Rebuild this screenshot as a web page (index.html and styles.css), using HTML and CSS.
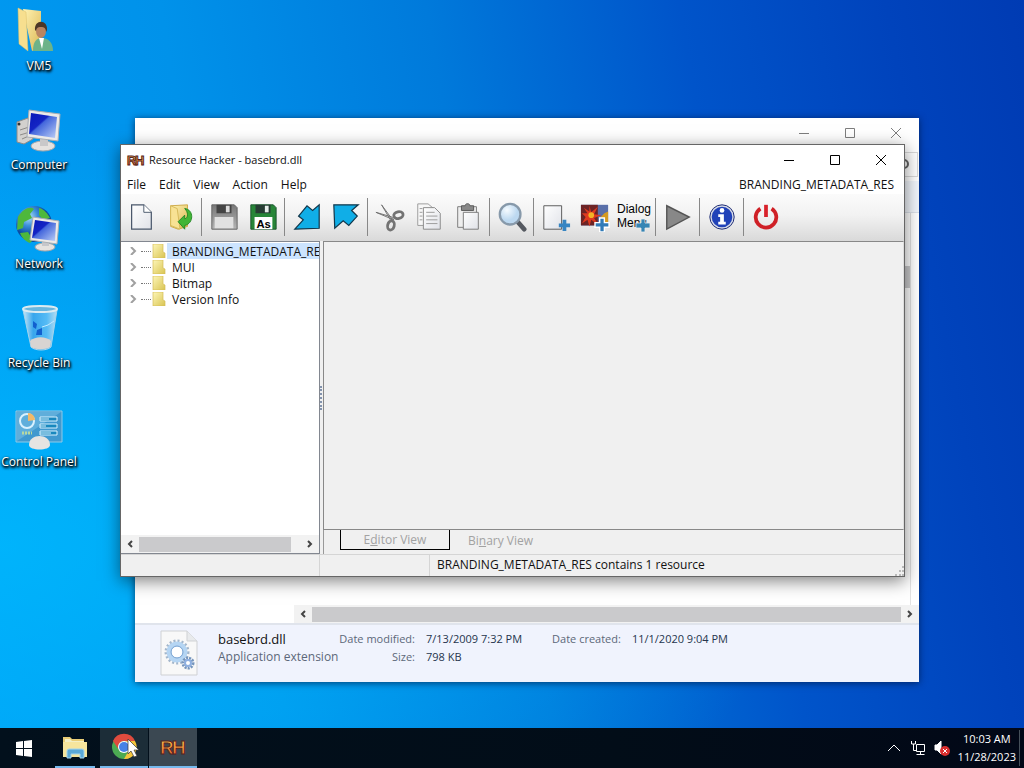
FILE: index.html
```
<!DOCTYPE html>
<html lang="en">
<head>
    <meta charset="UTF-8">
    <meta name="viewport" content="width=device-width, initial-scale=1.0">
    <title>Resource Hacker - basebrd.dll</title>
    <link rel="stylesheet" href="styles.css">
</head>
<body>
    <!-- Shared gradients for the icons -->
    <svg class="defs" aria-hidden="true">
        <defs>
            <linearGradient id="paper" x1="0" y1="0" x2="1" y2="1"><stop offset="0" stop-color="#fff"/><stop offset="1" stop-color="#e0e2e8"/></linearGradient>
            <linearGradient id="folder" x1="0" y1="0" x2="1" y2="1"><stop offset="0" stop-color="#fff3b4"/><stop offset="1" stop-color="#dcb854"/></linearGradient>
            <linearGradient id="node" x1="0" y1="0" x2="1" y2="1"><stop offset="0" stop-color="#fdf6b8"/><stop offset="1" stop-color="#d9c452"/></linearGradient>
            <linearGradient id="screen" x1="0" y1="0" x2="1" y2="1"><stop offset="0" stop-color="#0818b8"/><stop offset=".4" stop-color="#1424c4"/><stop offset=".45" stop-color="#4467dc"/><stop offset="1" stop-color="#bccff6"/></linearGradient>
            <linearGradient id="glass" x1="0" y1="0" x2="1" y2="0"><stop offset="0" stop-color="#c9e8f8"/><stop offset=".3" stop-color="#38a6ed"/><stop offset=".7" stop-color="#55bbf5"/><stop offset="1" stop-color="#b7ddf2"/></linearGradient>
            <linearGradient id="metal" x1="0" y1="0" x2="0" y2="1"><stop offset="0" stop-color="#777"/><stop offset="1" stop-color="#b5b5b5"/></linearGradient>
            <radialGradient id="globe" cx=".35" cy=".3"><stop offset="0" stop-color="#b6e4fb"/><stop offset=".5" stop-color="#3c8edb"/><stop offset="1" stop-color="#0b4ba0"/></radialGradient>
            <radialGradient id="lens" cx=".35" cy=".3"><stop offset="0" stop-color="#f5fbff"/><stop offset="1" stop-color="#bcd8f0"/></radialGradient>
            <linearGradient id="fire" x1="0" y1="0" x2="0" y2="1"><stop offset="0" stop-color="#ffd552"/><stop offset="1" stop-color="#ec5a24"/></linearGradient>
        </defs>
    </svg>

    <main class="desktop">
        <!-- Desktop shortcuts -->
        <nav class="shortcuts" aria-label="Desktop">
            <button class="shortcut">
                <svg viewBox="0 0 48 48"><path d="M8 2l18 2v36l-9 4z" fill="url(#folder)"/><path d="M3 1l8 4 2 39-9-7z" fill="#f7df8f" stroke="#dcc06a" stroke-width=".5"/><path d="M18 44c0-9 3-13 9-13s11 4 11 13z" fill="#6db389"/><path d="M24 31l3 11 2-11z" fill="#fff"/><ellipse cx="26" cy="24" rx="5" ry="7" fill="#b98562"/><path d="M20 23c-1-11 13-11 12 0l-1 2c0-4-2-5-5-5-4 0-4 1-5 4z" fill="#4c3626"/></svg>
                <span>VM5</span>
            </button>
            <button class="shortcut">
                <svg viewBox="0 0 48 48"><path d="M2 16l11-4 5 21-9 5-7-2z" fill="#d3d1ce" stroke="#8d8b89"/><circle cx="4" cy="18" r="1.500" fill="#333"/><path d="M5 24l9-3m-9 8l10-3m-8 7l9-4" stroke="#8d8b89"/><ellipse cx="28" cy="40" rx="12" ry="5" fill="#e5e2df" stroke="#a6a6a8"/><path d="M25 32h8v8h-8z" fill="#c9c8c9"/><path d="M14 4l31 4-2 27-31-4z" fill="#eceae8" stroke="#a9aeb4"/><path d="M16 7l26 4-2 21-26-4z" fill="url(#screen)"/></svg>
                <span>Computer</span>
            </button>
            <button class="shortcut">
                <svg viewBox="0 0 48 48"><circle cx="19" cy="19" r="18" fill="url(#globe)"/><path d="M3 12C8 3 16 1 19 4l-4 5 2 4-8 4-1 6-6 2zM24 3c5 1 9 6 11 10l-7 2-4-5zM5 28l8-1 5 8-3 3c-5-2-8-5-10-10z" fill="#4eb83c"/><ellipse cx="30" cy="42" rx="10" ry="4" fill="#e5e2df" stroke="#a6a6a8"/><path d="M27 36h7v5h-7z" fill="#c6c7cb"/><path d="M18 12l26 4-2 23-27-4z" fill="#eceae8" stroke="#a9aeb4"/><path d="M20 15l21 3-1 18-23-3z" fill="url(#screen)"/></svg>
                <span>Network</span>
            </button>
            <button class="shortcut">
                <svg viewBox="0 0 48 48"><path d="M8 6h34l-6 37c-4 4-16 4-20 0z" fill="url(#glass)" stroke="#a5d4ec"/><path d="M15 37c5-5 16-5 21 0l-1 6c-4 3-15 3-19 0z" fill="#d8d4d2"/><ellipse cx="25" cy="5" rx="17" ry="3" fill="#68b6df" stroke="#dcebf1" stroke-width="2"/><path d="M18 17l4 3-1 5-3-2zM22 26l5-2v7l-6 0z" fill="#1260cf"/><path d="M39 17q-6 5-12 6" stroke="#c3eaff" fill="none"/></svg>
                <span>Recycle Bin</span>
            </button>
            <button class="shortcut">
                <svg viewBox="0 0 48 48"><path d="M1 8h46v31H1z" fill="#4099cf" stroke="#8fcae8"/><path d="M2 9h44L2 38z" fill="#75bce2" opacity=".6"/><circle cx="12" cy="18" r="7" fill="none" stroke="#d8f1ff" stroke-width="2"/><path d="M13 10a7 7 0 0 1 7 7l-7 1z" fill="#f4b968"/><path d="M7 30h10" stroke="#b7d9a0" stroke-width="3" stroke-dasharray="2 1"/><path d="M25 14h17v4H25zm0 7h17v4H25zm0 7h17v4H25z" fill="#1988be" stroke="#d9f2ff"/><path d="M25 16h9m-9 7h6m-6 7h11" stroke="#d9f2ff"/><path d="M14 42c0-12 21-12 21 0 0 6-21 6-21 0z" fill="#e5e4e2"/></svg>
                <span>Control Panel</span>
            </button>
        </nav>

        <!-- Explorer window behind -->
        <section class="window explorer" aria-label="Explorer">
            <header class="titlebar">
                <div class="window-buttons faded">
                    <button aria-label="Minimize"><svg viewBox="0 0 12 12"><path d="M1 6.500h10"/></svg></button>
                    <button aria-label="Maximize"><svg viewBox="0 0 12 12"><path d="M1.500 1.500h9v9h-9z"/></svg></button>
                    <button aria-label="Close"><svg viewBox="0 0 12 12"><path d="M1 1l10 10M11 1L1 11"/></svg></button>
                </div>
            </header>
            <div class="address-row">
                <div class="search"><svg viewBox="0 0 16 16"><circle cx="9" cy="7" r="4"/><path d="M6 10l-4 4"/></svg></div>
            </div>
            <div class="command-row"></div>
            <div class="files"><div class="files-list"><i class="vertical-thumb"></i></div></div>
            <div class="scrollbar explorer-scroll">
                <button aria-label="Scroll left"><svg viewBox="0 0 8 8"><path d="M6 1L3 4l3 3"/></svg></button>
                <i class="thumb"></i>
                <button aria-label="Scroll right"><svg viewBox="0 0 8 8"><path d="M2 1l3 3-3 3"/></svg></button>
            </div>
            <footer class="details">
                <svg class="dll-icon" viewBox="0 0 38 46"><path d="M1 1h26l10 10v34H1z" fill="#f8f8f8" stroke="#cfd1d4"/><path d="M27 1v10h10" fill="#e8eaec" stroke="#cfd1d4"/><circle cx="17" cy="22" r="11" fill="none" stroke="#a3b6cb" stroke-width="3" stroke-dasharray="2 2"/><circle cx="17" cy="22" r="8" fill="#fff" stroke="#b5d5f3" stroke-width="5"/><circle cx="17" cy="22" r="6" fill="none" stroke="#7ba4d2"/><circle cx="28" cy="33" r="5" fill="none" stroke="#7595bd" stroke-width="3" stroke-dasharray="2 1"/><circle cx="28" cy="33" r="3" fill="#fff" stroke="#8eafe0" stroke-width="2"/></svg>
                <div class="file-name"><strong>basebrd.dll</strong><span>Application extension</span></div>
                <dl class="modified">
                    <dt>Date modified:</dt><dd>7/13/2009 7:32 PM</dd>
                    <dt>Size:</dt><dd>798 KB</dd>
                </dl>
                <dl>
                    <dt>Date created:</dt><dd>11/1/2020 9:04 PM</dd>
                </dl>
            </footer>
        </section>

        <!-- Resource Hacker window -->
        <section class="window hacker" aria-label="Resource Hacker">
            <header class="titlebar">
                <svg class="app-icon" viewBox="0 0 18 16"><text class="rh" x="0 8" y="13" font-size="13">RH</text></svg>
                <h1>Resource Hacker - basebrd.dll</h1>
                <div class="window-buttons">
                    <button aria-label="Minimize"><svg viewBox="0 0 12 12"><path d="M1 6.500h10"/></svg></button>
                    <button aria-label="Maximize"><svg viewBox="0 0 12 12"><path d="M1.500 1.500h9v9h-9z"/></svg></button>
                    <button aria-label="Close"><svg viewBox="0 0 12 12"><path d="M1 1l10 10M11 1L1 11"/></svg></button>
                </div>
            </header>
            <nav class="menubar">
                <button>File</button><button>Edit</button><button>View</button><button>Action</button><button>Help</button>
                <span>BRANDING_METADATA_RES</span>
            </nav>
            <div class="toolbar" role="toolbar">
                <div class="tools">
                    <button aria-label="New"><svg viewBox="0 0 32 32"><path d="M6 3h13l8 8v18H6z" fill="url(#paper)" stroke="#49576b" stroke-width="1.300"/><path d="M19 3v8h8" fill="#fff" stroke="#49576b"/></svg></button>
                    <button aria-label="Open"><svg viewBox="0 0 32 32"><path d="M6 4l18-1v23l-10 3-8-3z" fill="url(#folder)" stroke="#cda946"/><path d="M6 4l7 3 3 22-10-4z" fill="#f8e294" stroke="#d5b95a"/><path d="M21 7c10 1 10 16 0 18v4l-7-8 7-7v4c4-1 4-7 0-11z" fill="#42b536" stroke="#238823"/></svg></button>
                </div>
                <div class="tools">
                    <button aria-label="Save"><svg viewBox="0 0 32 32"><path d="M3 3h24l3 3v23H3z" fill="url(#metal)" stroke="#626262"/><path d="M8 3h16v9H8z" fill="#444"/><path d="M18 4h4v7h-4z" fill="#ddd"/><path d="M6 16h20v12H6z" fill="#e1e1e1"/></svg></button>
                    <button aria-label="Save as"><svg viewBox="0 0 32 32"><path d="M3 3h24l3 3v23H3z" fill="#278638" stroke="#19512b"/><path d="M8 3h16v9H8z" fill="#263c33"/><path d="M18 4h4v7h-4z" fill="#e6eeea"/><path d="M7 16h19v13H7z" fill="#fff"/><text x="9" y="28" class="as">As</text></svg></button>
                </div>
                <div class="tools">
                    <button aria-label="Compile"><svg viewBox="0 0 32 32"><path d="M3 29L29 28V3L22 9l-6-5-9 11 5 4z" fill="#10aee7" stroke="#12374b" stroke-width="1.300"/></svg></button>
                    <button aria-label="Decompile"><svg viewBox="0 0 32 32"><path d="M3 3h26l-7 6 6 6-9 10-6-5-9 8z" fill="#10aee7" stroke="#12374b" stroke-width="1.300"/></svg></button>
                </div>
                <div class="tools">
                    <button aria-label="Cut"><svg viewBox="0 0 32 32"><path d="M1 11l17 5 2 3zM7 3l10 17 1-2z" fill="#eee" stroke="#6e6e6e"/><g fill="none" stroke="#737373" stroke-width="3"><ellipse cx="25" cy="14" rx="5" ry="3.500" transform="rotate(-12 25 14)"/><ellipse cx="17" cy="25" rx="3.500" ry="5" transform="rotate(15 17 25)"/></g></svg></button>
                    <button aria-label="Copy"><svg viewBox="0 0 32 32"><path d="M4 2h11l6 5v18H4z" fill="#f7f7f7" stroke="#999"/><path d="M10 6h12l6 6v17H10z" fill="url(#paper)" stroke="#888"/><path d="M6 7h3m-3 4h3m-3 4h3m-3 4h3m4-8h9m-9 4h12m-12 4h12m-12 4h12" stroke="#999"/></svg></button>
                    <button aria-label="Paste"><svg viewBox="0 0 32 32"><path d="M5 5h20v22H5z" fill="#eee" stroke="#777"/><path d="M9 4h4c0-3 5-3 5 0h4v5H9z" fill="#888" stroke="#555"/><path d="M11 11h16v18H11z" fill="url(#paper)" stroke="#777"/></svg></button>
                </div>
                <div class="tools">
                    <button aria-label="Find"><svg viewBox="0 0 32 32"><path d="M22 21l7 8" stroke="#555960" stroke-width="5" stroke-linecap="round"/><circle cx="14" cy="13" r="11" fill="url(#lens)" stroke="#8799aa" stroke-width="2.500"/></svg></button>
                </div>
                <div class="tools">
                    <button aria-label="Add resource"><svg viewBox="0 0 32 32"><path d="M3 4h19v25H3z" fill="url(#paper)" stroke="#555"/><path d="M23 19h4v4h4v4h-4v4h-4v-4h-4v-4h4z" fill="#3785c2"/></svg></button>
                    <button aria-label="Add image"><svg viewBox="0 0 32 32"><path d="M1 3h29v22H1z" fill="#596fa9"/><path d="M1 3h18v22H1z" fill="#6c2325"/><path d="M10 4l2 7 7-6-4 8 8 1-8 3 5 8-8-6-2 7-2-7-6 4 4-7-4-4 6 0-4-6 6 4z" fill="#df391f"/><path d="M23 25l-3-7 6-6 4-2v15z" fill="#d59a21"/><circle cx="12" cy="14" r="3" fill="#f3b326"/><path d="M21 17h5v5h5v5h-5v5h-5v-5h-5v-5h5z" fill="#317bb7" stroke="#fff" stroke-width="1.500"/></svg></button>
                    <button aria-label="Add dialog or menu"><svg class="dialog-icon" viewBox="0 0 34 32"><text x="0" y="12">Dialog</text><text x="0" y="26">Menu</text><path d="M24 18h4v4h5v5h-5v4h-4v-4h-5v-5h5z" fill="#3785b4" stroke="#ececec" stroke-width=".8"/></svg></button>
                </div>
                <div class="tools">
                    <button aria-label="Run"><svg viewBox="0 0 32 32"><path d="M4 4l24 12L4 29z" fill="#888" stroke="#555" stroke-width="1.500"/></svg></button>
                </div>
                <div class="tools">
                    <button aria-label="About"><svg viewBox="0 0 32 32"><circle cx="16" cy="16" r="12" fill="#2142b8" stroke="#d7dbe7" stroke-width="2"/><circle cx="16" cy="16" r="13" fill="none" stroke="#14236e"/><circle cx="16" cy="9" r="2.500" fill="#fff"/><path d="M12 13h6v8h2v3h-8v-3h2v-5h-2z" fill="#fff"/></svg></button>
                </div>
                <div class="tools">
                    <button aria-label="Exit"><svg viewBox="0 0 32 32"><path d="M10 7a11 11 0 1 0 12 0" fill="none" stroke="#cf2026" stroke-width="4"/><path d="M16 3v13" stroke="#d8222b" stroke-width="4"/></svg></button>
                </div>
            </div>

            <div class="work">
                <aside class="tree">
                    <ul>
                        <li class="selected"><button aria-label="Expand"><svg viewBox="0 0 8 8"><path d="M2 0l4 4-4 4"/></svg></button><i></i><svg class="node" viewBox="0 0 14 14"><path d="M1 0h10v8l2 1v5H1z" fill="url(#node)" stroke="#d5bd57" stroke-width=".7"/></svg><span>BRANDING_METADATA_RES</span></li>
                        <li><button aria-label="Expand"><svg viewBox="0 0 8 8"><path d="M2 0l4 4-4 4"/></svg></button><i></i><svg class="node" viewBox="0 0 14 14"><path d="M1 0h10v8l2 1v5H1z" fill="url(#node)" stroke="#d5bd57" stroke-width=".7"/></svg><span>MUI</span></li>
                        <li><button aria-label="Expand"><svg viewBox="0 0 8 8"><path d="M2 0l4 4-4 4"/></svg></button><i></i><svg class="node" viewBox="0 0 14 14"><path d="M1 0h10v8l2 1v5H1z" fill="url(#node)" stroke="#d5bd57" stroke-width=".7"/></svg><span>Bitmap</span></li>
                        <li><button aria-label="Expand"><svg viewBox="0 0 8 8"><path d="M2 0l4 4-4 4"/></svg></button><i></i><svg class="node" viewBox="0 0 14 14"><path d="M1 0h10v8l2 1v5H1z" fill="url(#node)" stroke="#d5bd57" stroke-width=".7"/></svg><span>Version Info</span></li>
                    </ul>
                    <div class="scrollbar">
                        <button aria-label="Scroll left"><svg viewBox="0 0 8 8"><path d="M6 1L3 4l3 3"/></svg></button>
                        <i class="thumb tree-thumb"></i>
                        <button aria-label="Scroll right"><svg viewBox="0 0 8 8"><path d="M2 1l3 3-3 3"/></svg></button>
                    </div>
                </aside>
                <div class="splitter"><i></i></div>
                <div class="editor">
                    <div class="page"></div>
                    <div class="tabs">
                        <button class="active" disabled>E<u>d</u>itor View</button>
                        <button disabled>Bi<u>n</u>ary View</button>
                    </div>
                </div>
            </div>
            <footer class="statusbar">
                <span class="panel-one"></span><span class="panel-two"></span>
                <span class="message">BRANDING_METADATA_RES contains 1 resource</span>
                <svg class="grip" viewBox="0 0 10 10"><path d="M8 0h2v2H8zM5 4h2v2H5zM8 4h2v2H8zM1 8h2v2H1zM5 8h2v2H5zM8 8h2v2H8z" fill="#b9b9b9"/></svg>
            </footer>
        </section>
    </main>

    <!-- Taskbar -->
    <footer class="taskbar">
        <button class="start" aria-label="Start"><svg viewBox="0 0 18 18"><path d="M1 3l7-1v7H1zM9 2l8-1v8H9zM1 10h7v7l-7-1zM9 10h8v8l-8-1z" fill="#fff"/></svg></button>
        <button class="task running" aria-label="File Explorer"><svg viewBox="0 0 26 24"><path d="M1 2h7l2 2h12v3h2v14H1z" fill="#e9cd76"/><path d="M3 4h5l2 2h12v4H3z" fill="#f4efc5"/><path d="M1 7h24v15H1z" fill="#f6e59d"/><path d="M5 23v-7q0-2 2-2h13q2 0 2 2v7h-4v-4H9v4z" fill="#5ba9d8" stroke="#a5d5ec"/></svg></button>
        <button class="task running hover" aria-label="Chrome">
            <svg viewBox="0 0 26 26"><circle cx="13" cy="13" r="12" fill="#4caa52"/><path d="M2 7A12 12 0 0 1 24 7H13a6 6 0 0 0-5 9z" fill="#df4b3e"/><path d="M24 7a12 12 0 0 1-11 18l5-9a6 6 0 0 0-5-9z" fill="#f5c53c"/><circle cx="13" cy="13" r="6" fill="#fff"/><circle cx="13" cy="13" r="5" fill="#4682e6"/></svg>
            <svg class="cursor" viewBox="0 0 12 19"><path d="M1 1v15l3-3 3 6 3-1-3-6h5z" fill="#fff" stroke="#333" stroke-width=".7"/></svg>
        </button>
        <button class="task running current" aria-label="Resource Hacker"><svg viewBox="0 0 26 24"><text class="rh" x="0 12" y="19" font-size="19">RH</text></svg></button>
        <div class="tray">
            <button aria-label="Show hidden icons"><svg viewBox="0 0 16 16"><path d="M2 11l6-6 6 6"/></svg></button>
            <button aria-label="Network"><svg viewBox="0 0 16 16"><path d="M6.500 4.500h8v7h-8zm4 7v3m-4 0h8M1.500 1v3h4V1m-2 3v6.500h3"/></svg></button>
            <button aria-label="Volume muted"><svg viewBox="0 0 16 16"><path d="M1 5h2l4-4v13l-4-4H1z" fill="#fff"/><circle cx="11" cy="11" r="5" fill="#d92e2e" stroke="none"/><path d="M9 9l4 4m0-4l-4 4"/></svg></button>
            <time>10:03 AM<br>11/28/2023</time>
        </div>
    </footer>
</body>
</html>
```
FILE: styles.css
```
* {
    box-sizing: border-box;
}

body {
    margin: 0;
    height: 100vh;
    display: flex;
    flex-direction: column;
    overflow: hidden;
    font-family: "Open Sans", "Noto Sans", sans-serif;
    font-size: 12px;
    color: #111;
    background: #0078d7;
}

button {
    font: inherit;
    color: inherit;
    background: none;
    border: 0;
    padding: 0;
}

svg {
    display: block;
}

.defs {
    position: absolute;
    width: 0;
    height: 0;
}

.desktop {
    position: relative;
    flex: 1;
    min-height: 0;
    background:
        radial-gradient(ellipse at 0% 75%, rgba(0, 190, 255, 0.7), rgba(0, 160, 255, 0) 55%),
        linear-gradient(80deg, #009cf5 0%, #0092ea 25%, #007adb 48%, #0054ca 70%, #0043bc 88%, #003bb3 100%);
}

/* Desktop shortcuts */
.shortcuts {
    display: flex;
    flex-direction: column;
    gap: 31px;
    width: 78px;
    padding-top: 7px;
}

.shortcut {
    display: flex;
    flex-direction: column;
    align-items: center;
    gap: 2px;
    height: 68px;
    color: white;
    line-height: 18px;
    white-space: nowrap;
    text-shadow: 1px 1px 2px black, 0 1px 3px black, 1px 2px 3px black;
}

.shortcut svg {
    width: 48px;
    height: 48px;
}

/* Windows */
.window {
    position: absolute;
    display: flex;
    flex-direction: column;
    background: white;
}

.hacker {
    top: 144px;
    right: 119px;
    bottom: 151px;
    left: 120px;
    border: 1px solid #666;
    box-shadow: 0 4px 16px rgba(0, 0, 0, 0.5);
}

.explorer {
    top: 118px;
    right: 105px;
    bottom: 46px;
    left: 135px;
    box-shadow: 0 1px 7px rgba(0, 20, 60, 0.7);
}

.titlebar {
    display: flex;
    align-items: center;
    flex: none;
    height: 29px;
}

.titlebar h1 {
    margin: 0;
    font-size: 11px;
    font-weight: normal;
}

.app-icon {
    width: 18px;
    height: 16px;
    margin: 0 4px 0 6px;
    overflow: visible;
}

.rh {
    font-family: "Liberation Sans", sans-serif;
    font-weight: bold;
    fill: url(#fire);
    stroke: #522;
    stroke-width: 1px;
}

.window-buttons {
    display: flex;
    margin-left: auto;
}

.window-buttons button {
    display: grid;
    place-items: center;
    width: 46px;
    height: 28px;
}

.window-buttons svg {
    width: 12px;
    height: 12px;
    fill: none;
    stroke: black;
}

.faded {
    opacity: 0.5;
}

/* Resource Hacker */
.menubar {
    display: flex;
    align-items: center;
    gap: 13px;
    height: 20px;
    padding: 0 10px 0 6px;
}

.menubar span {
    margin-left: auto;
}

.toolbar {
    display: flex;
    align-items: center;
    height: 47px;
    padding-bottom: 2px;
    background: linear-gradient(#fbfbfb, #f2f2f2 45%, #d9d9d9);
}

.tools {
    display: flex;
    align-items: center;
    height: 38px;
}

.tools + .tools {
    margin-left: 2px;
    padding-left: 2px;
    border-left: 1px solid #888;
}

.tools button {
    display: grid;
    place-items: center;
    width: 39px;
}

.tools svg {
    width: 30px;
    height: 30px;
}

.as {
    font: bold 12px "Liberation Sans", sans-serif;
}

.tools .dialog-icon {
    width: 34px;
    height: 32px;
    font: 12px "Liberation Sans", sans-serif;
    overflow: visible;
}

.work {
    display: flex;
    flex: 1;
    min-height: 0;
    background: #f0f0f0;
}

.tree {
    display: flex;
    flex-direction: column;
    justify-content: space-between;
    width: 199px;
    background: white;
    border: 1px solid #828790;
    border-left: 0;
}

.tree ul {
    margin: 0;
    padding: 1px 0 0;
    list-style: none;
}

.tree li {
    display: flex;
    align-items: center;
    height: 16px;
    overflow: hidden;
    white-space: nowrap;
}

.tree li button {
    width: 8px;
    margin: 0 4px 0 8px;
}

.tree li button svg {
    width: 8px;
    height: 8px;
    fill: none;
    stroke: #a0a0a0;
    stroke-width: 2px;
}

.tree li i {
    width: 10px;
    border-top: 1px dotted #777;
}

.node {
    flex: none;
    width: 14px;
    height: 14px;
    margin: 0 1px;
}

.tree li span {
    flex: 1;
    padding-left: 5px;
    overflow: hidden;
}

.tree .selected span {
    background: #cce4ff;
}

.scrollbar {
    display: flex;
    align-items: center;
    height: 18px;
    background: #f2f2f2;
}

.scrollbar button {
    display: grid;
    place-items: center;
    flex: none;
    width: 18px;
    height: 17px;
}

.scrollbar svg {
    width: 8px;
    height: 8px;
    fill: none;
    stroke: #444;
    stroke-width: 2px;
}

.thumb {
    flex: 1;
    height: 15px;
    background: #cacacc;
}

.tree-thumb {
    margin-right: 10px;
}

.splitter {
    display: flex;
    align-items: center;
    width: 3px;
}

.splitter i {
    width: 3px;
    height: 24px;
    border-left: 2px dotted #8393ad;
}

.editor {
    display: flex;
    flex: 1;
    flex-direction: column;
}

.page {
    flex: 1;
    border: 1px solid #888;
    border-right-color: #ddd;
}

.tabs {
    display: flex;
    height: 24px;
    padding-left: 16px;
    border-left: 1px solid #999;
    color: #a2a2a2;
}

.tabs button {
    height: 20px;
    padding: 0 18px;
}

.tabs .active {
    width: 110px;
    border: 1px solid black;
    border-top: 0;
}

.statusbar {
    display: flex;
    align-items: center;
    height: 22px;
    background: #f0f0f0;
    border-top: 1px solid #d5d5d5;
}

.panel-one {
    align-self: stretch;
    width: 199px;
    border-right: 1px solid #d5d5d5;
}

.panel-two {
    align-self: stretch;
    width: 110px;
    border-right: 1px solid #d5d5d5;
}

.message {
    padding: 0 0 3px 7px;
}

.grip {
    align-self: flex-end;
    width: 10px;
    height: 10px;
    margin-left: auto;
}

/* Explorer */
.address-row {
    height: 34px;
    padding: 5px 1px 4px;
}

.search {
    display: flex;
    align-items: center;
    justify-content: flex-end;
    height: 25px;
    padding-right: 6px;
    border: 1px solid #d9d9d9;
}

.search svg {
    width: 16px;
    height: 16px;
    fill: none;
    stroke: #666;
    stroke-width: 2px;
}

.command-row {
    height: 32px;
    background: #f1f5fb;
    border-bottom: 1px solid #dce2ea;
}

.files {
    display: flex;
    flex: 1;
    padding-right: 8px;
}

.files-list {
    flex: 1;
    padding-top: 53px;
    border-right: 1px solid #e2e2e2;
}

.vertical-thumb {
    display: block;
    width: 17px;
    height: 22px;
    margin-left: auto;
    background: #cacacc;
}

.explorer-scroll {
    flex: none;
    margin-left: 159px;
}

.details {
    display: flex;
    flex: none;
    gap: 4px;
    height: 59px;
    padding: 5px 25px;
    line-height: 18px;
    color: #5c6879;
    background: #f0f3fd;
    border-top: 2px solid #e0e4ec;
}

.dll-icon {
    width: 38px;
    height: 46px;
}

.file-name {
    display: flex;
    flex-direction: column;
    width: 115px;
    margin-left: 16px;
    white-space: nowrap;
}

.file-name strong {
    font-size: 13px;
    font-weight: normal;
    color: #111;
}

.details dl {
    display: grid;
    grid-template-columns: auto auto;
    grid-auto-rows: 18px;
    column-gap: 11px;
    margin: 0 0 0 26px;
    font-size: 11px;
    white-space: nowrap;
}

.details .modified {
    grid-template-columns: 78px auto;
    margin-left: 0;
}

.details dt {
    text-align: right;
}

.details dd {
    margin: 0;
    color: #26354d;
}

/* Taskbar */
.taskbar {
    display: flex;
    flex: none;
    height: 40px;
    color: white;
    background: linear-gradient(90deg, #02101c, #020d18 60%, #020817);
}

.start,
.task {
    display: grid;
    place-items: center;
    width: 48px;
}

.start {
    margin-right: 3px;
}

.start svg {
    width: 18px;
    height: 18px;
}

.task {
    position: relative;
    margin-right: 1px;
}

.task svg {
    width: 26px;
    height: 26px;
    overflow: visible;
}

.running {
    border-bottom: 2px solid #76b9ed;
}

.running:nth-of-type(2) {
    width: 40px;
    margin: 0 5px 0 4px;
}

.hover {
    background: #1c2d38;
}

.current {
    background: #3b4852;
}

.task .cursor {
    position: absolute;
    top: 10px;
    left: 27px;
    width: 12px;
    height: 19px;
}

.tray {
    display: flex;
    align-items: center;
    gap: 8px;
    margin-left: auto;
    padding-right: 4px;
}

.tray svg {
    width: 16px;
    height: 16px;
    fill: none;
    stroke: white;
}

.tray time {
    padding-right: 3px;
    border-right: 1px solid #46505a;
    font-size: 11px;
    line-height: 18px;
    text-align: center;
}
```
